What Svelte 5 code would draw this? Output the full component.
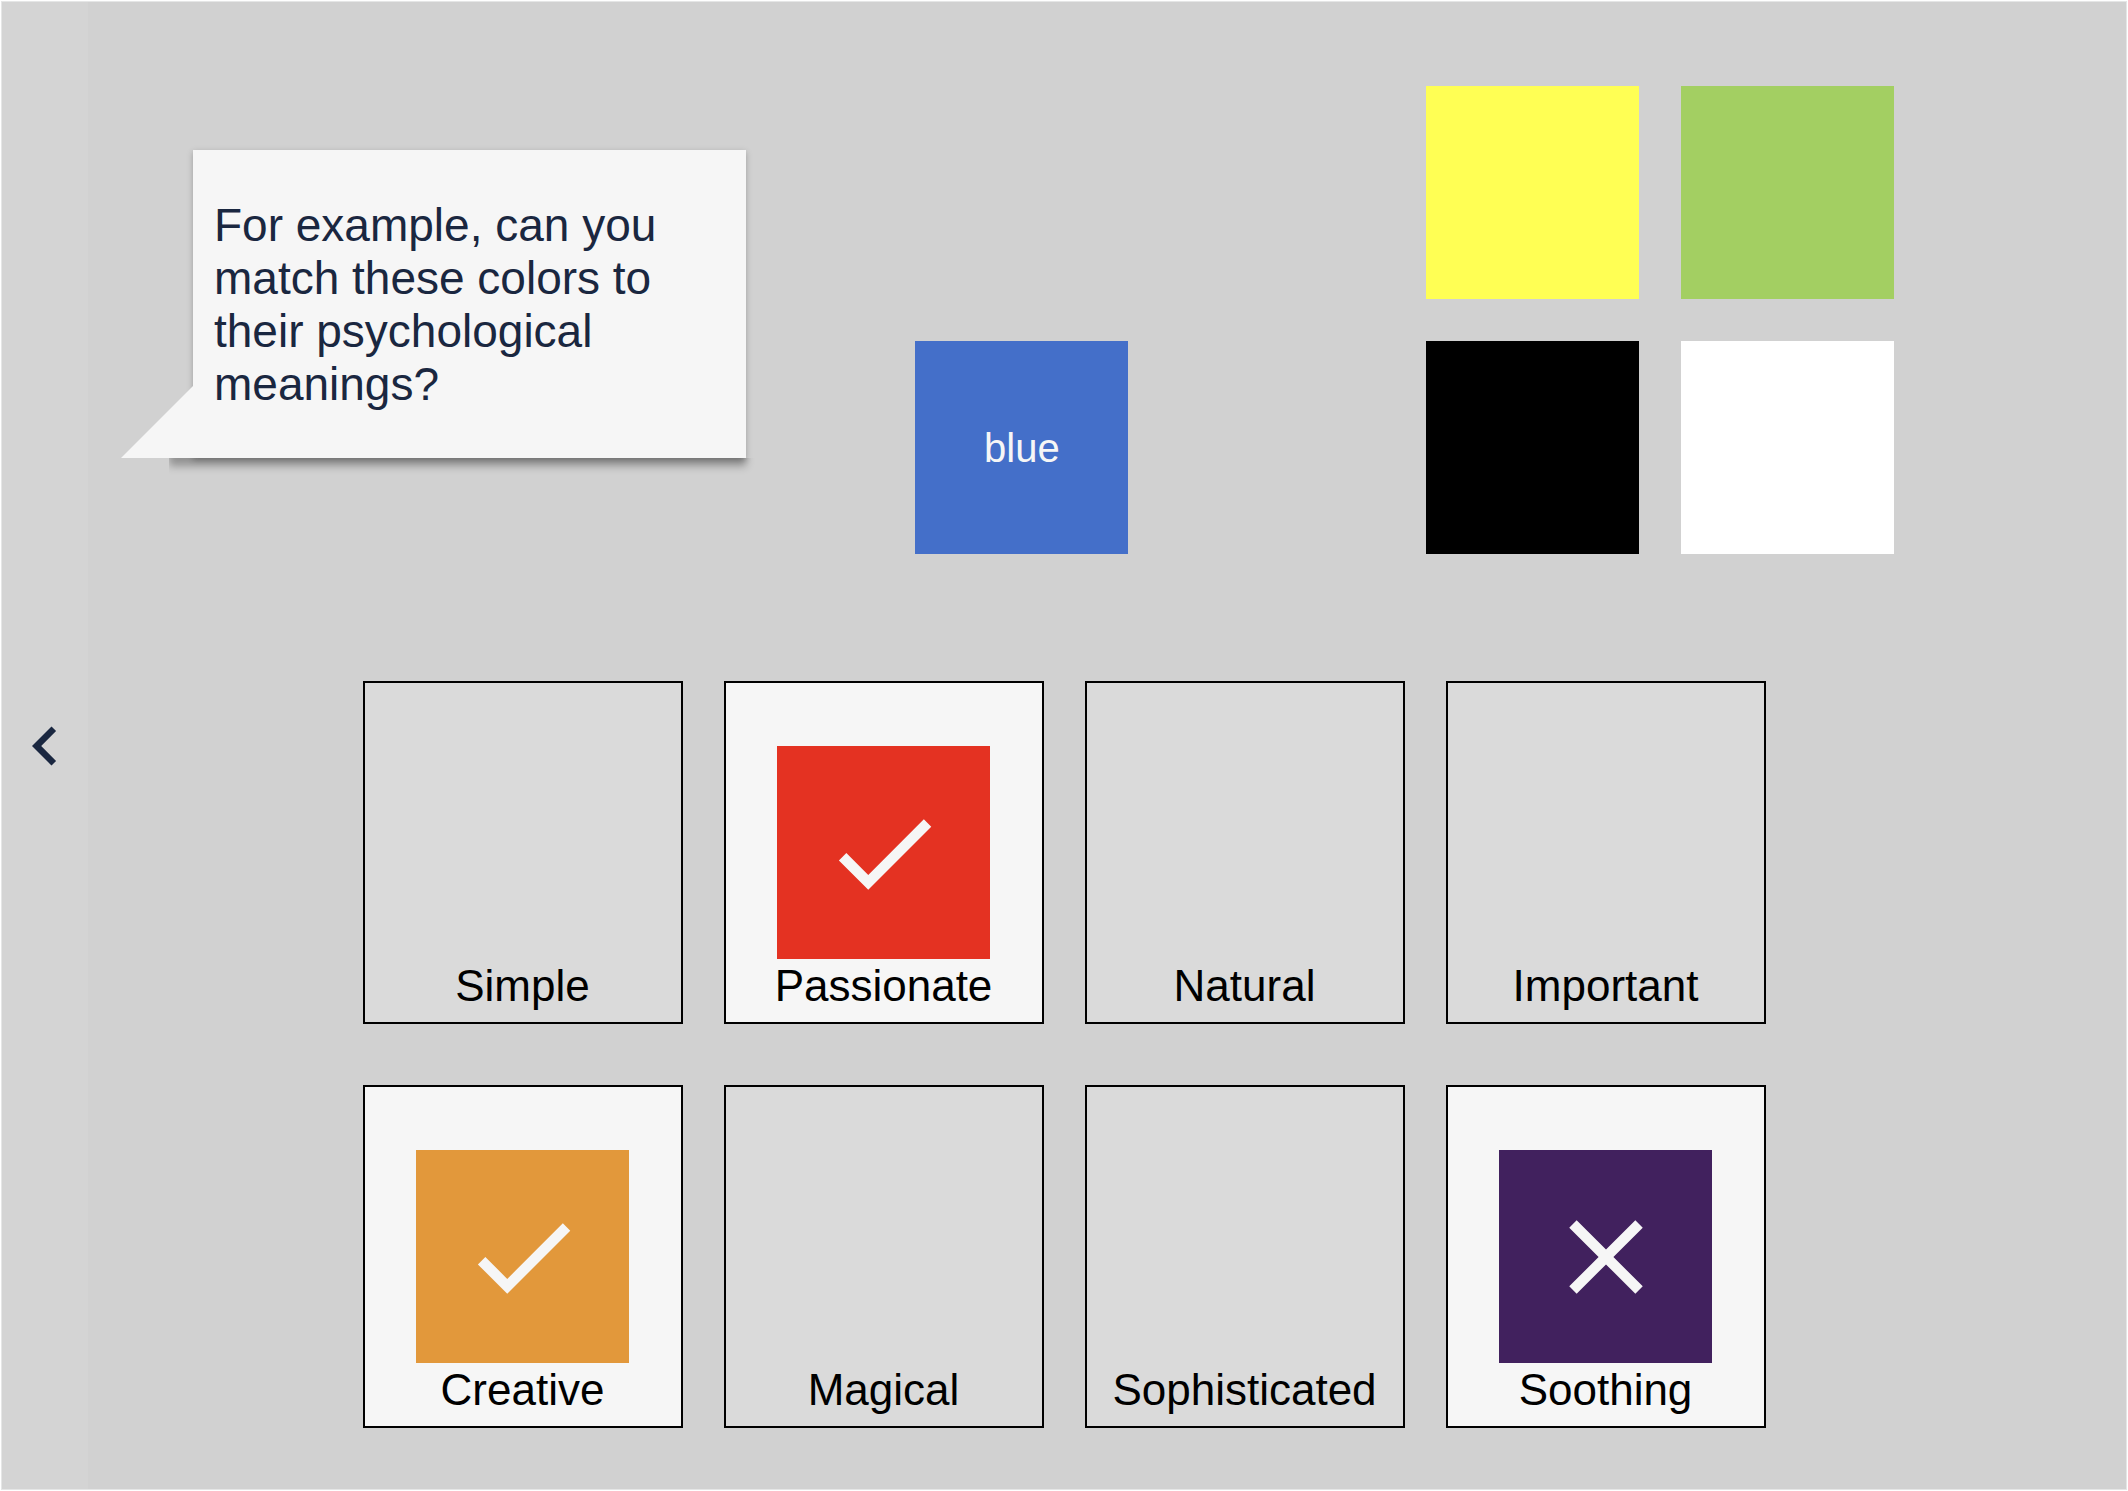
<script lang="ts">
	type Color = { name: string; hex: string; meaning: string };
	type Slot = { meaning: string; color: string | null };

	const COLORS: Color[] = [
		{ name: 'red', hex: '#e43222', meaning: 'Passionate' },
		{ name: 'orange', hex: '#e2983b', meaning: 'Creative' },
		{ name: 'purple', hex: '#41215e', meaning: 'Magical' },
		{ name: 'blue', hex: '#446fc9', meaning: 'Soothing' },
		{ name: 'yellow', hex: '#ffff54', meaning: 'Important' },
		{ name: 'green', hex: '#a3cf62', meaning: 'Natural' },
		{ name: 'black', hex: '#000000', meaning: 'Sophisticated' },
		{ name: 'white', hex: '#ffffff', meaning: 'Simple' }
	];

	let slots = $state<Slot[]>([
		{ meaning: 'Simple', color: null },
		{ meaning: 'Passionate', color: 'red' },
		{ meaning: 'Natural', color: null },
		{ meaning: 'Important', color: null },
		{ meaning: 'Creative', color: 'orange' },
		{ meaning: 'Magical', color: null },
		{ meaning: 'Sophisticated', color: null },
		{ meaning: 'Soothing', color: 'purple' }
	]);
	let pool = $state(['yellow', 'green', 'black', 'white']);
	let current = $state<string | null>('blue');

	const find = (name: string | null) => COLORS.find((c) => c.name === name);
	const active = $derived(find(current));

	function pick(name: string) {
		pool = pool.map((n) => (n === name ? current : n)).filter((n): n is string => n !== null);
		current = name;
	}

	function place(slot: Slot) {
		if (slot.color || !current) return;
		slot.color = current;
		current = null;
	}
</script>

<main class="page">
	<button class="back" aria-label="Previous">
		<svg viewBox="0 0 24 24" aria-hidden="true"><path d="M15.41 7.41 14 6l-6 6 6 6 1.41-1.41L10.83 12z" /></svg>
	</button>

	<div class="stage">
		<section class="top">
			<p class="bubble">For example, can you match these colors to their psychological meanings?</p>
			<div class="current">
				{#if active}
					<div class="swatch" style="background:{active.hex}">{active.name}</div>
				{/if}
			</div>
			<div class="pool">
				{#each pool as name (name)}
					<button class="swatch" style="background:{find(name)?.hex}" aria-label={name} onclick={() => pick(name)}></button>
				{/each}
			</div>
		</section>

		<section class="board">
			{#each slots as slot (slot.meaning)}
				{@const color = find(slot.color)}
				<button class="slot" class:filled={color} onclick={() => place(slot)}>
					{#if color}
						<span class="swatch" style="background:{color.hex}">
							<svg viewBox="0 0 24 24" aria-hidden="true">
								{#if color.meaning === slot.meaning}
									<path d="M9 16.17 4.83 12l-1.42 1.41L9 19 21 7l-1.41-1.41z" />
								{:else}
									<path d="M19 6.41 17.59 5 12 10.59 6.41 5 5 6.41 10.59 12 5 17.59 6.41 19 12 13.41 17.59 19 19 17.59 13.41 12z" />
								{/if}
							</svg>
						</span>
					{/if}
					<span class="meaning">{slot.meaning}</span>
				</button>
			{/each}
		</section>
	</div>
</main>

<style>
	:global(body) { background: #fff; }

	.page { display: grid; grid-template-columns: 86px minmax(0, 1fr); min-height: 100vh; box-sizing: border-box; border: 1px solid #fff; padding: 1px; background: #e5e6e6; font-family: "Liberation Sans", Arial, sans-serif; }
	button { font: inherit; color: inherit; border: 0; padding: 0; cursor: pointer; }

	.back { display: flex; align-items: center; justify-content: center; background: #d4d4d4; }
	.back svg { width: 78px; height: 78px; fill: #1a2740; }

	.stage { padding: 84px 86px 60px 0; background: #d1d1d1; }
	.top { display: grid; grid-template-columns: 553px 169fr 213px 297fr 468px; padding: 0 146px 0 105px; }

	.bubble { position: relative; align-self: start; box-sizing: border-box; margin: 64px 0 0; padding: 49px 60px 47px 21px; background: #f6f6f6; color: #1a2740; font-size: 46px; line-height: 53px; box-shadow: 0 2px 6px rgba(0, 0, 0, 0.25); }
	/* tail, and the drop shadow that runs on under it */
	.bubble::before { content: ''; position: absolute; left: -72px; bottom: 0; width: 73px; height: 73px; background: #f6f6f6; clip-path: polygon(100% 0, 100% 100%, 0 100%); }
	.bubble::after { content: ''; position: absolute; left: -24px; right: 0; bottom: 0; height: 60px; box-shadow: 0 8px 8px rgba(0, 0, 0, 0.3); clip-path: inset(100% -16px -20px 0); }

	.current { grid-column: 3; align-self: end; }
	.pool { grid-column: 5; display: grid; grid-template-columns: repeat(2, 213px); gap: 42px; min-height: 468px; align-content: start; }

	.swatch { display: flex; align-items: center; justify-content: center; width: 213px; height: 213px; color: #f6f6f6; font-size: 40px; line-height: 46px; }
	.swatch svg { width: 126px; height: 126px; fill: #f6f6f6; }

	.board { display: grid; grid-template-columns: repeat(4, 320px); justify-content: center; gap: 61px 41px; margin-top: 127px; }
	.slot { display: flex; flex-direction: column; align-items: center; justify-content: flex-end; box-sizing: border-box; height: 343px; padding-bottom: 9px; border: 2px solid #000; background: #dadada; color: #000; }
	.slot.filled { background: #f6f6f6; }
	.meaning { font-size: 44px; line-height: 54px; }
</style>
